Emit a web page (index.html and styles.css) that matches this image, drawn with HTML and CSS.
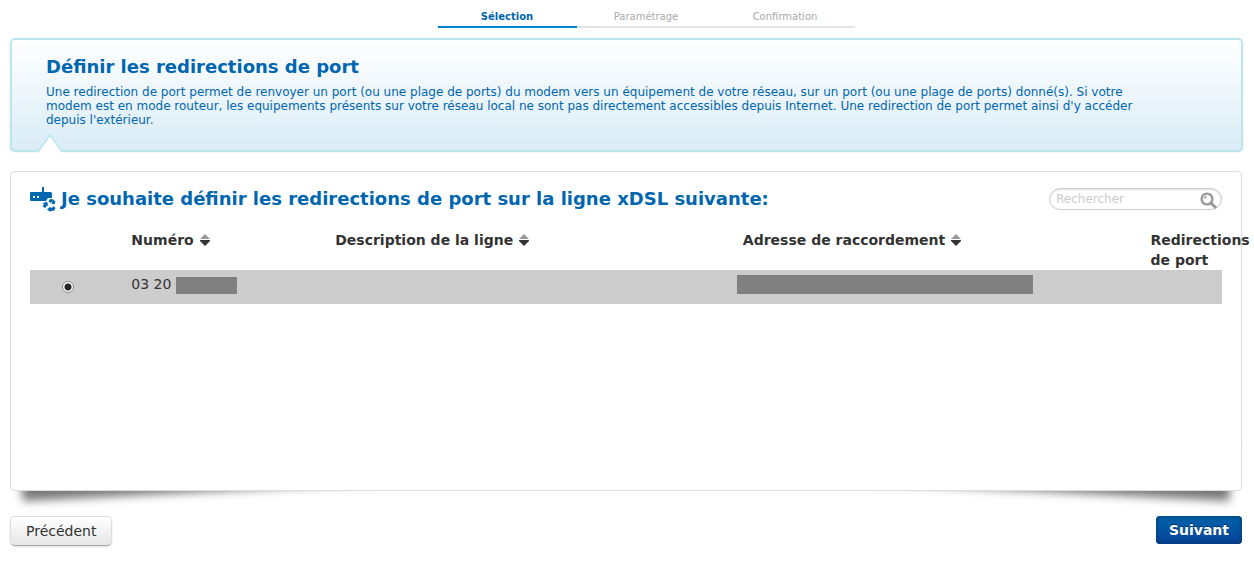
FILE: index.html
```html
<!DOCTYPE html>
<html lang="fr">
<head>
<meta charset="utf-8">
<title>Définir les redirections de port</title>
<link rel="stylesheet" href="styles.css">
</head>
<body>
<ol class="steps">
  <li class="step step-active" aria-current="step">Sélection</li>
  <li class="step">Paramétrage</li>
  <li class="step">Confirmation</li>
</ol>
<main>
  <section class="intro">
    <h1 class="title">Définir les redirections de port</h1>
    <p class="intro-text">Une redirection de port permet de renvoyer un port (ou une plage de ports) du modem vers un équipement de votre réseau, sur un port (ou une plage de ports) donné(s). Si votre<br>modem est en mode routeur, les equipements présents sur votre réseau local ne sont pas directement accessibles depuis Internet. Une redirection de port permet ainsi d'y accéder<br>depuis l'extérieur.</p>
    <svg class="notch" width="26" height="19" viewBox="0 0 26 19" aria-hidden="true"><path d="M0 19L13 1L26 19Z" fill="#fff"/><path d="M1 18L13 1L25 18" fill="none" stroke="#bbe6ec" stroke-width="1.5"/></svg>
  </section>
  <form class="lifted">
    <div class="panel">
      <div class="panel-head">
        <svg class="modem" width="26" height="26" viewBox="0 0 26 26" aria-hidden="true">
          <path d="M12 1H14V6H20.500Q22 6 22 7.500V12L18 12L16 15H1Q0 15 0 14V7Q0 6 1 6H12Z" fill="#0068b1"/>
          <path d="M3 10h2v2H3zM7 10h2v2H7z" fill="#fff"/>
          <g fill="#0068b1"><path d="M18.500 15.500L20 13L23.500 13.500L24.200 15L25.500 14.500L24.500 18.500L21 17.500L22.300 16.500L21.500 15.800L20.500 17Z"/><path d="M12.500 17.500L17 15.500L18.300 20L16.700 19.500L15.500 22L12.500 20.500L14 18.500Z"/><path d="M17 23.500L20.500 20.500V21.800L22.500 21.600L23.500 20L25.500 22L24 24.800L20.500 25V26Z"/></g>
        </svg>
        <h2 class="title">Je souhaite définir les redirections de port sur la ligne xDSL suivante:</h2>
        <div class="search">
          <input class="search-input" type="text" placeholder="Rechercher" aria-label="Rechercher">
          <button class="search-button" type="button" aria-label="Lancer la recherche">
            <svg width="18" height="18" viewBox="0 0 18 18"><circle cx="7" cy="7" r="5.4" fill="#fff" stroke="#999" stroke-width="2.4"/><path d="M4.500 7Q4.500 4.500 7 4.500" fill="none" stroke="#aaa" stroke-width="1.4"/><path d="M11 11L16 16" stroke="#999" stroke-width="3"/></svg>
          </button>
        </div>
      </div>
      <table class="lines">
        <colgroup><col class="col-pick"><col class="col-number"><col class="col-wide"><col class="col-wide"><col></colgroup>
        <thead>
          <tr>
            <td></td>
            <th scope="col">Numéro <svg class="sort" width="12" height="12" viewBox="0 0 12 12" aria-hidden="true"><path d="M6 0L11 5H1Z" fill="#999"/><path d="M1 6H11V7L6 12L1 7Z" fill="#333"/></svg></th>
            <th scope="col">Description de la ligne <svg class="sort" width="12" height="12" viewBox="0 0 12 12" aria-hidden="true"><path d="M6 0L11 5H1Z" fill="#999"/><path d="M1 6H11V7L6 12L1 7Z" fill="#333"/></svg></th>
            <th scope="col">Adresse de raccordement <svg class="sort" width="12" height="12" viewBox="0 0 12 12" aria-hidden="true"><path d="M6 0L11 5H1Z" fill="#999"/><path d="M1 6H11V7L6 12L1 7Z" fill="#333"/></svg></th>
            <th scope="col">Redirections de port</th>
          </tr>
        </thead>
        <tbody>
          <tr>
            <td class="pick"><input class="radio" type="radio" name="line" checked aria-label="Ligne 03 20"></td>
            <td><span class="number">03 20 <span class="mask mask-number"></span></span></td>
            <td></td>
            <td class="address"><span class="mask mask-address"></span></td>
            <td></td>
          </tr>
        </tbody>
      </table>
    </div>
  </form>
</main>
<div class="actions">
  <button class="button button-back" type="button">Précédent</button>
  <button class="button button-next" type="button">Suivant</button>
</div>
</body>
</html>
```
FILE: styles.css
```css
* { box-sizing: border-box; }
body {
  margin: 0;
  padding: 6px 12px 20px 10px;
  background: #fff;
  color: #333;
  font: 14px/20px "DejaVu Sans", sans-serif;
}
.steps {
  display: flex;
  justify-content: center;
  margin: 0 0 10px;
  padding: 0 0 0 40px;
  list-style: none;
  font-size: 10px;
}
.step {
  flex: 0 1 139px;
  padding-top: 1px;
  border-bottom: 2px solid #e3e3e3;
  color: #aaa;
  line-height: 19px;
  text-align: center;
}
.step-active {
  border-color: #0083ca;
  color: #0066b0;
  font-weight: bold;
}
.title {
  margin: 0;
  color: #0066b0;
  font-size: 18px;
  line-height: 24px;
  font-weight: bold;
}
.intro {
  position: relative;
  margin-right: -1px;
  padding: 15px 24px 23px 34px;
  border: 2px solid #bbe6ec;
  border-radius: 5px;
  background: linear-gradient(#fff, #d9ecf6);
  box-shadow: 0 0 1px #bbb;
}
.intro-text {
  margin: 6px 0 0;
  color: #0066b0;
  font-size: 12px;
  line-height: 14px;
}
.notch {
  position: absolute;
  bottom: -3px;
  left: 25px;
}
.lifted {
  position: relative;
  z-index: 0;
  margin-top: 19px;
}
.lifted::before, .lifted::after {
  content: "";
  position: absolute;
  z-index: -1;
  bottom: 14px;
  left: 10px;
  width: 50%;
  max-width: 350px;
  height: 20%;
  box-shadow: 0 15px 10px #777;
  transform: rotate(-3deg);
}
.lifted::after {
  right: 10px;
  left: auto;
  transform: rotate(3deg);
}
.panel {
  min-height: 320px;
  padding: 14px 19px;
  border: 1px solid #ddd;
  border-radius: 4px;
  background: #fff;
}
.panel-head {
  display: flex;
  align-items: center;
  gap: 5px;
  margin-bottom: 18px;
}
.modem { flex: none; }
.search {
  display: flex;
  align-items: center;
  width: 173px;
  height: 22px;
  margin-left: auto;
  border: 1px solid #ccc;
  border-radius: 11px;
  background: #fff;
  box-shadow: inset 0 1px 2px #ddd;
}
.search-input {
  flex: 1;
  min-width: 0;
  padding: 0 6px;
  border: 0;
  background: none;
  font: 12px/20px "DejaVu Sans", sans-serif;
}
.search-input::placeholder { color: #ccc; }
.search-button {
  display: flex;
  padding: 4px 3px 0 0;
  border: 0;
  background: none;
}
.lines {
  width: 100%;
  border-collapse: collapse;
  table-layout: fixed;
}
.col-pick { width: 8%; }
.col-number { width: 17.1%; }
.col-wide { width: 34.2%; }
.lines th {
  padding: 0 6px;
  text-align: left;
  vertical-align: top;
}
.sort { vertical-align: -1px; }
.lines tbody tr { background: #ccc; }
.lines tbody td {
  height: 34px;
  padding: 4px 6px;
  vertical-align: top;
}
.lines .pick {
  padding: 11px 32px 0;
}
.radio {
  display: block;
  width: 12px;
  height: 12px;
  margin: 0;
  appearance: none;
  border: 1px solid #888;
  border-radius: 50%;
  background: radial-gradient(circle, #222 0 3px, #fff 4px);
}
.number {
  display: flex;
  align-items: center;
  gap: 5px;
}
.mask { background: #808080; }
.mask-number {
  width: 61px;
  height: 17px;
  margin-top: 2px;
}
.lines .address { padding: 5px 0 0; }
.mask-address {
  display: block;
  width: 296px;
  max-width: 100%;
  height: 19px;
}
.actions {
  display: flex;
  justify-content: space-between;
  align-items: flex-start;
  margin-top: 25px;
}
.button {
  font: 14px/20px "DejaVu Sans", sans-serif;
  border-radius: 5px;
}
.button-back {
  padding: 4px 15px;
  border: 1px solid #ddd;
  border-bottom-color: #aaa;
  background: linear-gradient(#fff, #e6e6e6);
  color: #333;
  box-shadow: 0 1px 2px #ddd;
}
.button-next {
  padding: 4px 13px;
  border: 0;
  border-radius: 4px;
  background: linear-gradient(#0063a8, #08439b);
  box-shadow: inset 0 0 5px #003468;
  color: #fff;
  font-weight: bold;
  text-shadow: 0 -1px 0 #003468;
}
```
